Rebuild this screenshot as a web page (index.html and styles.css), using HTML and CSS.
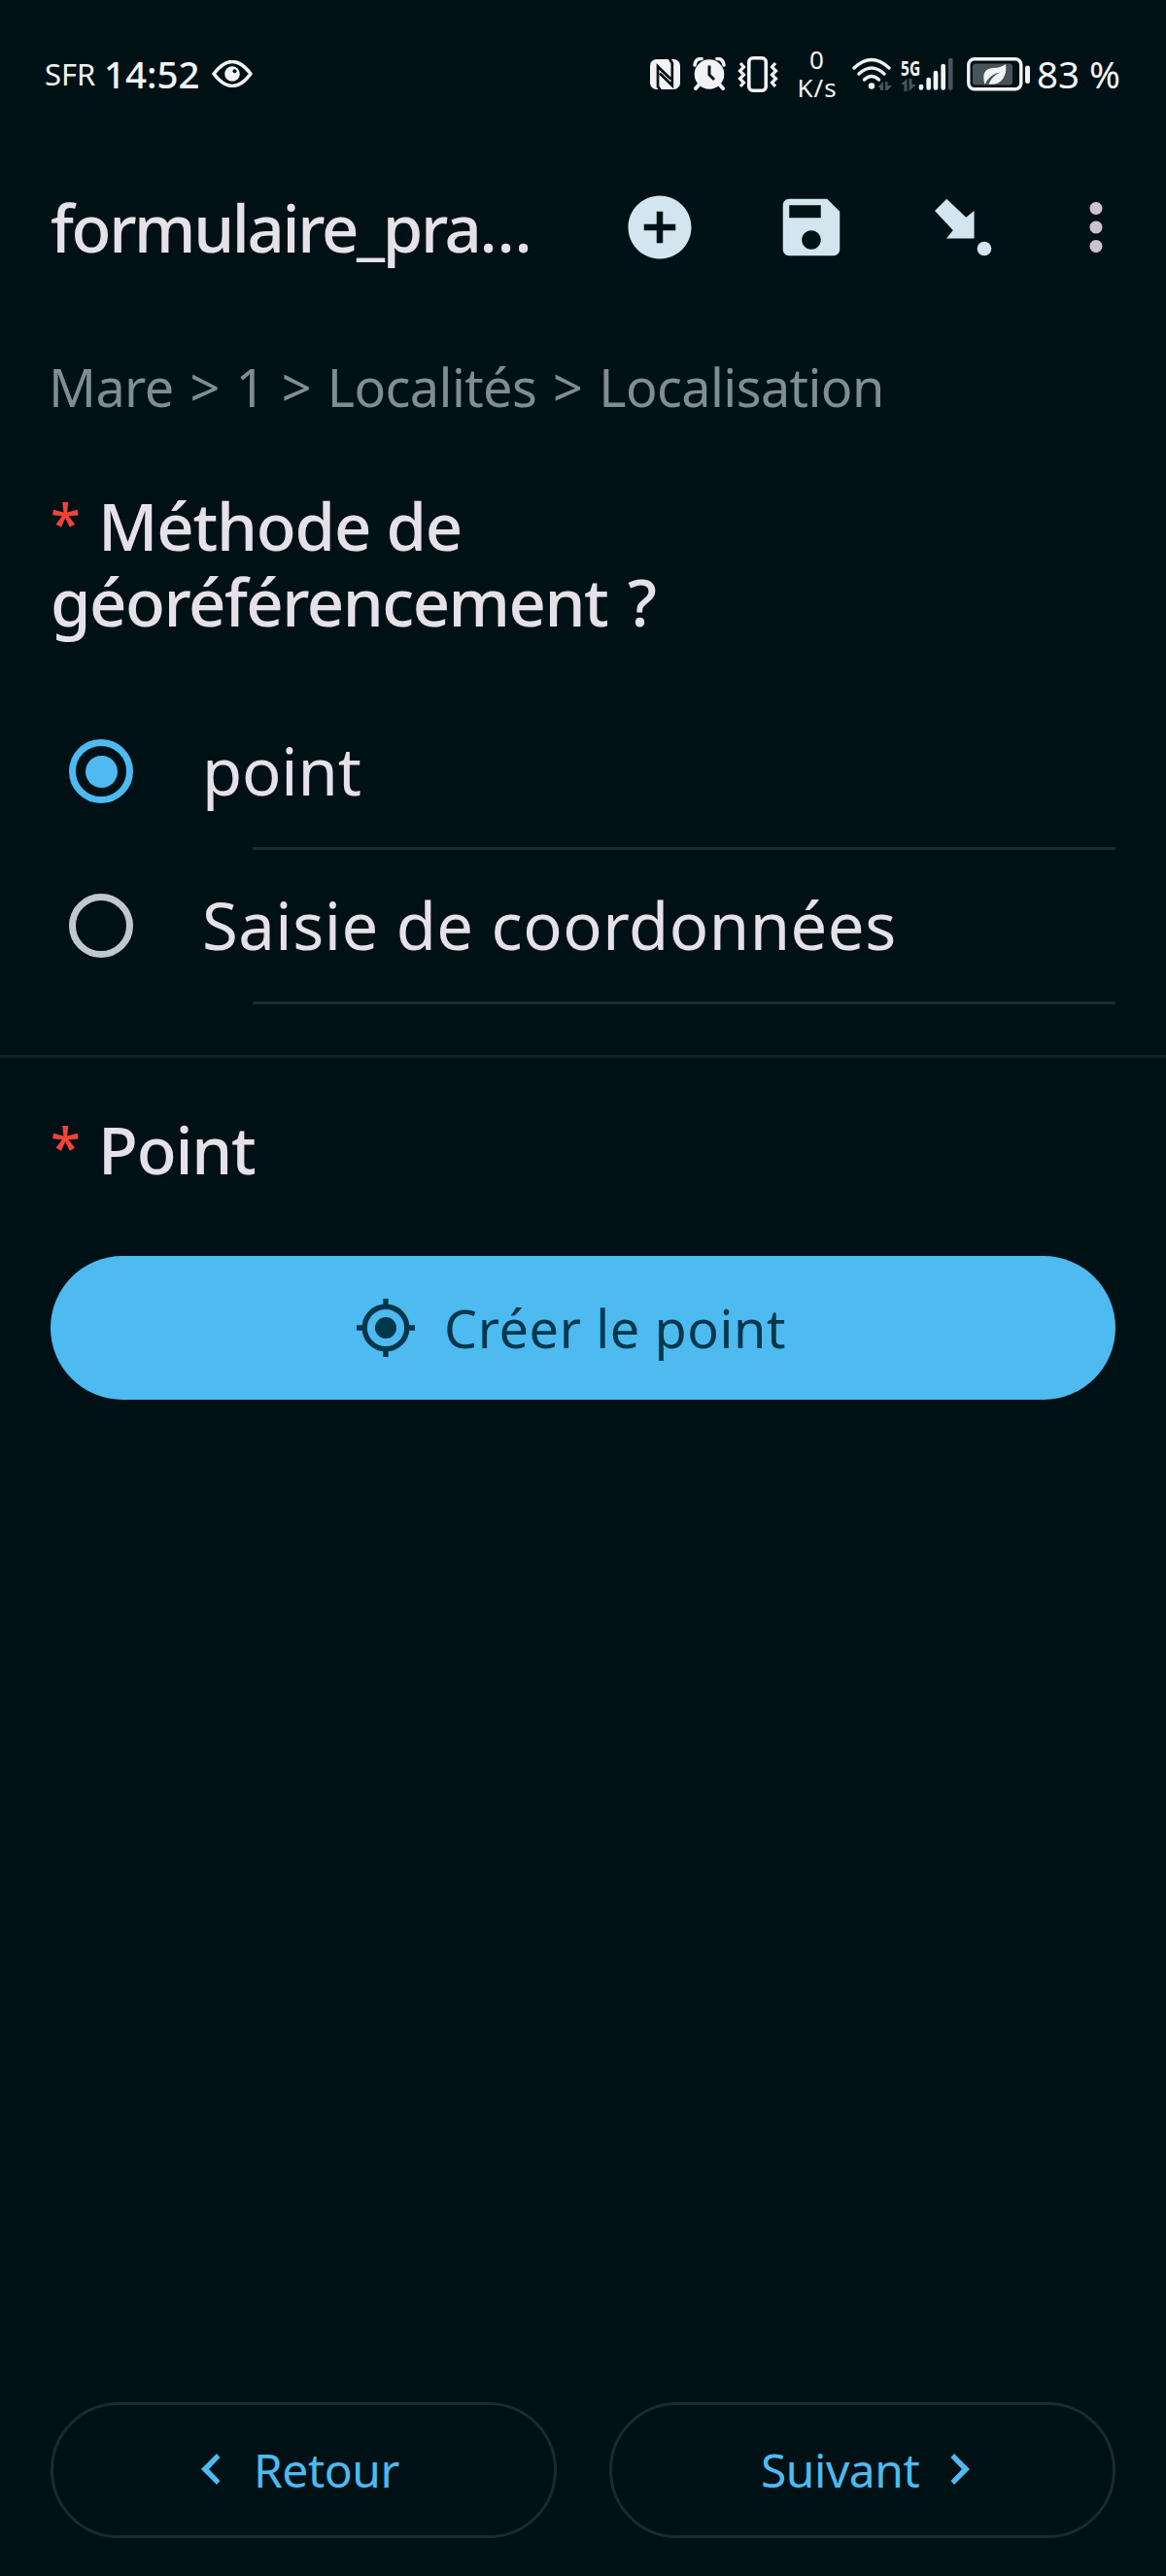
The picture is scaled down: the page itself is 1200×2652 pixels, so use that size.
FILE: index.html
```html
<!DOCTYPE html>
<html lang="fr">
<head>
<meta charset="utf-8">
<title>formulaire</title>
<link rel="stylesheet" href="styles.css">
</head>
<body>
<div class="screen">
  <div class="status">
    <span class="carrier">SFR</span>
    <span class="clock">14:52</span>
    <svg class="eye" width="42" height="28" viewBox="0 0 42 28"><path d="M2 14Q21-11 40 14Q21 39 2 14Z" fill="none" stroke="#f1f3f4" stroke-width="3.600" stroke-linejoin="round"/><circle cx="21" cy="14" r="7.800" fill="#f1f3f4"/><circle cx="23.500" cy="11.300" r="2" fill="#001116"/></svg>
    <span class="grow"></span>
    <svg width="31" height="31" viewBox="0 0 31 31"><rect width="31" height="31" rx="6.500" fill="#f1f3f4"/><path d="M10.500 31.500L8 28V7.500L21.500 20.500M20 -.500L22.800 4V27L10 14.500" fill="none" stroke="#001116" stroke-width="2.700"/></svg>
    <svg class="alarm" width="34" height="34" viewBox="0 0 34 34"><circle cx="17" cy="17.500" r="15.300" fill="#f1f3f4"/><path d="M2 8Q3 1 9 1.500M32 8Q31 1 25 1.500" fill="none" stroke="#f1f3f4" stroke-width="3.500" stroke-linecap="round"/><path d="M6.500 28L3 32M27.500 28L31 32" stroke="#f1f3f4" stroke-width="4" stroke-linecap="round"/><path d="M17 8.500V18L22 23" fill="none" stroke="#001116" stroke-width="3"/></svg>
    <svg class="vibrate" width="42" height="37" viewBox="0 0 42 37" fill="none" stroke="#f1f3f4"><rect x="11.800" y="1.800" width="17.500" height="33.400" rx="4" stroke-width="3.600"/><path d="M3 7L6.500 11L2.500 15L6.500 19L2.500 23L6.500 27L3 31M39 7L35.500 11L39.500 15L35.500 19L39.500 23L35.500 27L39 31" stroke-width="3.200"/></svg>
    <div class="speed"><span>0</span><span>K/s</span></div>
    <svg class="wifi" width="42" height="36" viewBox="0 0 42 36"><g fill="none" stroke="#f1f3f4" stroke-width="3.400" stroke-linecap="round"><path d="M3 12Q21-5 39 12"/><path d="M8 18Q21 6 34 18"/><path d="M13.500 24Q21 17 28.500 24"/></g><circle cx="21" cy="30.500" r="3.200" fill="#f1f3f4"/><path d="M28 31L33 26V35H30V32H28ZM35 26H37.500V30H42L37.500 35H35Z" fill="#49545a"/></svg>
    <div class="mobile">
      <div class="net"><span>5G</span><svg width="16" height="13" viewBox="0 0 16 13"><path d="M0 6L6.500 0V13H3.500V6ZM8.500 0H11.500V6H16L8.500 13Z" fill="#49545a"/></svg></div>
      <svg width="36" height="35" viewBox="0 0 36 35" stroke="#f1f3f4" stroke-width="4.700" stroke-linecap="round"><path d="M3 30V31.500M10.700 23V31.500M18 16V31.500M25.700 9V31.500"/><path d="M33.300 3V31.500" stroke="#49545a"/></svg>
    </div>
    <svg class="battery" width="66" height="35" viewBox="0 0 66 35"><rect x="1.800" y="1.800" width="54" height="31" rx="6" fill="none" stroke="#f1f3f4" stroke-width="3.400"/><rect x="6" y="6.500" width="41" height="22" rx="3" fill="#49545a"/><rect x="60" y="8.500" width="5" height="18.500" rx="2.500" fill="#f1f3f4"/><path d="M18.500 28Q14 12 27 11Q35 11 40 7Q41.500 18 35.500 24Q30 29 22.500 27.500Q26 19.500 34 15.500Q23.500 17.500 18.500 28Z" fill="#f1f3f4"/></svg>
    <span class="percent">83 %</span>
  </div>

  <header class="toolbar">
    <h1 class="title">formulaire_pra…</h1>
    <svg width="78" height="78" viewBox="0 0 24 24" fill="#d3e5ef"><path d="M12 2C6.480 2 2 6.480 2 12s4.480 10 10 10 10-4.480 10-10S17.520 2 12 2zm5 11h-4v4h-2v-4H7v-2h4V7h2v4h4v2z"/></svg>
    <svg width="78" height="78" viewBox="0 0 24 24" fill="#d3e5ef"><path d="M17 3H5c-1.110 0-2 .9-2 2v14c0 1.100.89 2 2 2h14c1.100 0 2-.9 2-2V7l-4-4zm-5 16c-1.660 0-3-1.340-3-3s1.340-3 3-3 3 1.340 3 3-1.340 3-3 3zm3-10H5V5h10v4z"/></svg>
    <svg width="78" height="78" viewBox="0 0 78 78" fill="#d3e5ef"><path d="M22.300 9.700L10 22L28.800 42L22 50.500H50.600V22L42.200 28.700Z"/><circle cx="61" cy="61" r="7.300"/></svg>
    <svg class="more" width="78" height="78" viewBox="0 0 24 24" fill="#cac4d0"><path d="M12 8c1.100 0 2-.9 2-2s-.9-2-2-2-2 .9-2 2 .9 2 2 2zm0 2c-1.100 0-2 .9-2 2s.9 2 2 2 2-.9 2-2-.9-2-2-2zm0 6c-1.100 0-2 .9-2 2s.9 2 2 2 2-.9 2-2-.9-2-2-2z"/></svg>
  </header>

  <main class="form">
    <p class="path">Mare &gt; 1 &gt; Localités &gt; Localisation</p>
    <h2 class="question"><span class="required">*</span>Méthode de<br><span class="second-line">géoréférencement ?</span></h2>
    <div class="choices">
      <div class="choice"><span class="radio radio-on"></span><span class="label label-point">point</span></div>
      <div class="choice"><span class="radio"></span><span class="label">Saisie de coordonnées</span></div>
    </div>
    <hr class="divider">
    <h2 class="question question-point"><span class="required">*</span>Point</h2>
    <button class="create"><svg width="60" height="60" viewBox="0 0 60 60" fill="none" stroke="#00374b" stroke-width="5.400"><circle cx="30" cy="30" r="21.800"/><path d="M30 0V9M30 51V60M0 30H9M51 30H60"/><circle cx="30" cy="30" r="11" fill="#00374b" stroke="none"/></svg><span>Créer le point</span></button>
  </main>

  <nav class="pager">
    <button class="nav-button back"><svg width="20" height="32" viewBox="0 0 20 32" fill="#4dbaf0"><path d="M16 0L19.500 4L8 16L19.500 28L16 32L0 16Z"/></svg><span>Retour</span></button>
    <button class="nav-button next"><span>Suivant</span><svg width="20" height="32" viewBox="0 0 20 32" fill="#4dbaf0"><path d="M4 0L.500 4L12 16L.500 28L4 32L20 16Z"/></svg></button>
  </nav>
</div>
</body>
</html>
```
FILE: styles.css
```css
* { box-sizing: border-box; }

body {
  margin: 0;
  background: #001116;
  color: #e6e1e9;
  font-family: "Noto Sans", "Liberation Sans", sans-serif;
}

.screen {
  display: flex;
  flex-direction: column;
  width: 1200px;
  height: 2652px;
  overflow: hidden;
}

svg { display: block; flex: none; }
h1, h2, p { margin: 0; white-space: nowrap; }
button { font-family: inherit; }

.status {
  display: flex;
  align-items: center;
  height: 154px;
  padding: 0 46px 2px 46px;
  color: #f1f3f4;
  line-height: 40px;
  white-space: nowrap;
}

.carrier { width: 61px; font-size: 31px; }
.clock { width: 111px; font-size: 38.5px; font-weight: 500; }
.grow { flex: 1; }
.alarm { margin-left: 13px; }
.vibrate { margin-left: 12px; }

.speed {
  display: flex;
  flex-direction: column;
  align-items: center;
  width: 42px;
  margin-left: 19px;
  font-size: 26px;
  line-height: 29px;
  letter-spacing: 1px;
}

.wifi { margin-left: 14px; }
.mobile { display: flex; align-items: center; margin-left: 9px; }
.net { width: 18px; }
.net span {
  display: block;
  font-size: 21px;
  font-weight: 700;
  line-height: 22px;
  transform: scaleX(.74);
  transform-origin: 0 50%;
}

.battery { margin-left: 14px; }
.percent { width: 87px; margin-left: 6px; font-size: 38.5px; }

.toolbar {
  display: flex;
  align-items: center;
  gap: 78px;
  height: 160px;
  padding-left: 52px;
}

.title {
  width: 510px;
  font-size: 67px;
  font-weight: 500;
  line-height: 78px;
  letter-spacing: -2.36px;
}

.more { margin-left: -19px; }

.form { flex: 1; padding-top: 49px; }

.path {
  padding-left: 50px;
  color: #7f8d94;
  font-size: 54px;
  line-height: 70px;
  letter-spacing: -.6px;
  word-spacing: 3.4px;
}

.question {
  padding: 69px 0 0 52px;
  font-size: 67px;
  font-weight: 500;
  line-height: 78px;
  letter-spacing: -1.2px;
}

.second-line { letter-spacing: -1.5px; word-spacing: 5px; }

.required {
  display: inline-block;
  width: 49px;
  color: #f44336;
  font-size: 56px;
  line-height: 60px;
  vertical-align: 8px;
}

.choices { padding-top: 58px; }

.choice {
  display: flex;
  align-items: center;
  height: 159px;
  padding: 0 0 3px 71px;
  background: linear-gradient(#1b2a31, #1b2a31) 260px 100% / 888px 3px no-repeat;
}

.radio {
  display: grid;
  place-items: center;
  width: 66px;
  height: 66px;
  border: 7px solid #c0c7cd;
  border-radius: 50%;
}

.radio-on { border-color: #4dbaf0; }
.radio-on::after {
  content: "";
  width: 33px;
  height: 33px;
  border-radius: 50%;
  background: #4dbaf0;
}

.label {
  margin: -3px 0 0 71px;
  font-size: 67px;
  line-height: 78px;
  letter-spacing: .49px;
}

.label-point { letter-spacing: -.2px; }

.divider {
  height: 3px;
  margin: 52px 0 0;
  border: 0;
  background: #101f25;
}

.question-point { padding-top: 55px; }

.create {
  display: flex;
  align-items: center;
  gap: 30px;
  width: 1096px;
  height: 148px;
  margin: 71px 0 0 52px;
  padding: 0 0 0 315px;
  border: 0;
  border-radius: 74px;
  background: #4dbaf0;
  color: #00374b;
  font-size: 54px;
  line-height: 70px;
  letter-spacing: .6px;
}

.pager {
  display: flex;
  gap: 54px;
  padding: 0 52px 39px;
}

.nav-button {
  display: flex;
  align-items: center;
  width: 521px;
  height: 140px;
  padding: 0;
  border: 3px solid #1b2a31;
  border-radius: 70px;
  background: none;
  color: #4dbaf0;
  font-size: 48px;
  line-height: 60px;
  letter-spacing: -.5px;
}

.nav-button svg { margin-bottom: 3px; }
.back { gap: 34px; padding-left: 152px; }
.next { gap: 32px; padding-left: 153px; }
```
